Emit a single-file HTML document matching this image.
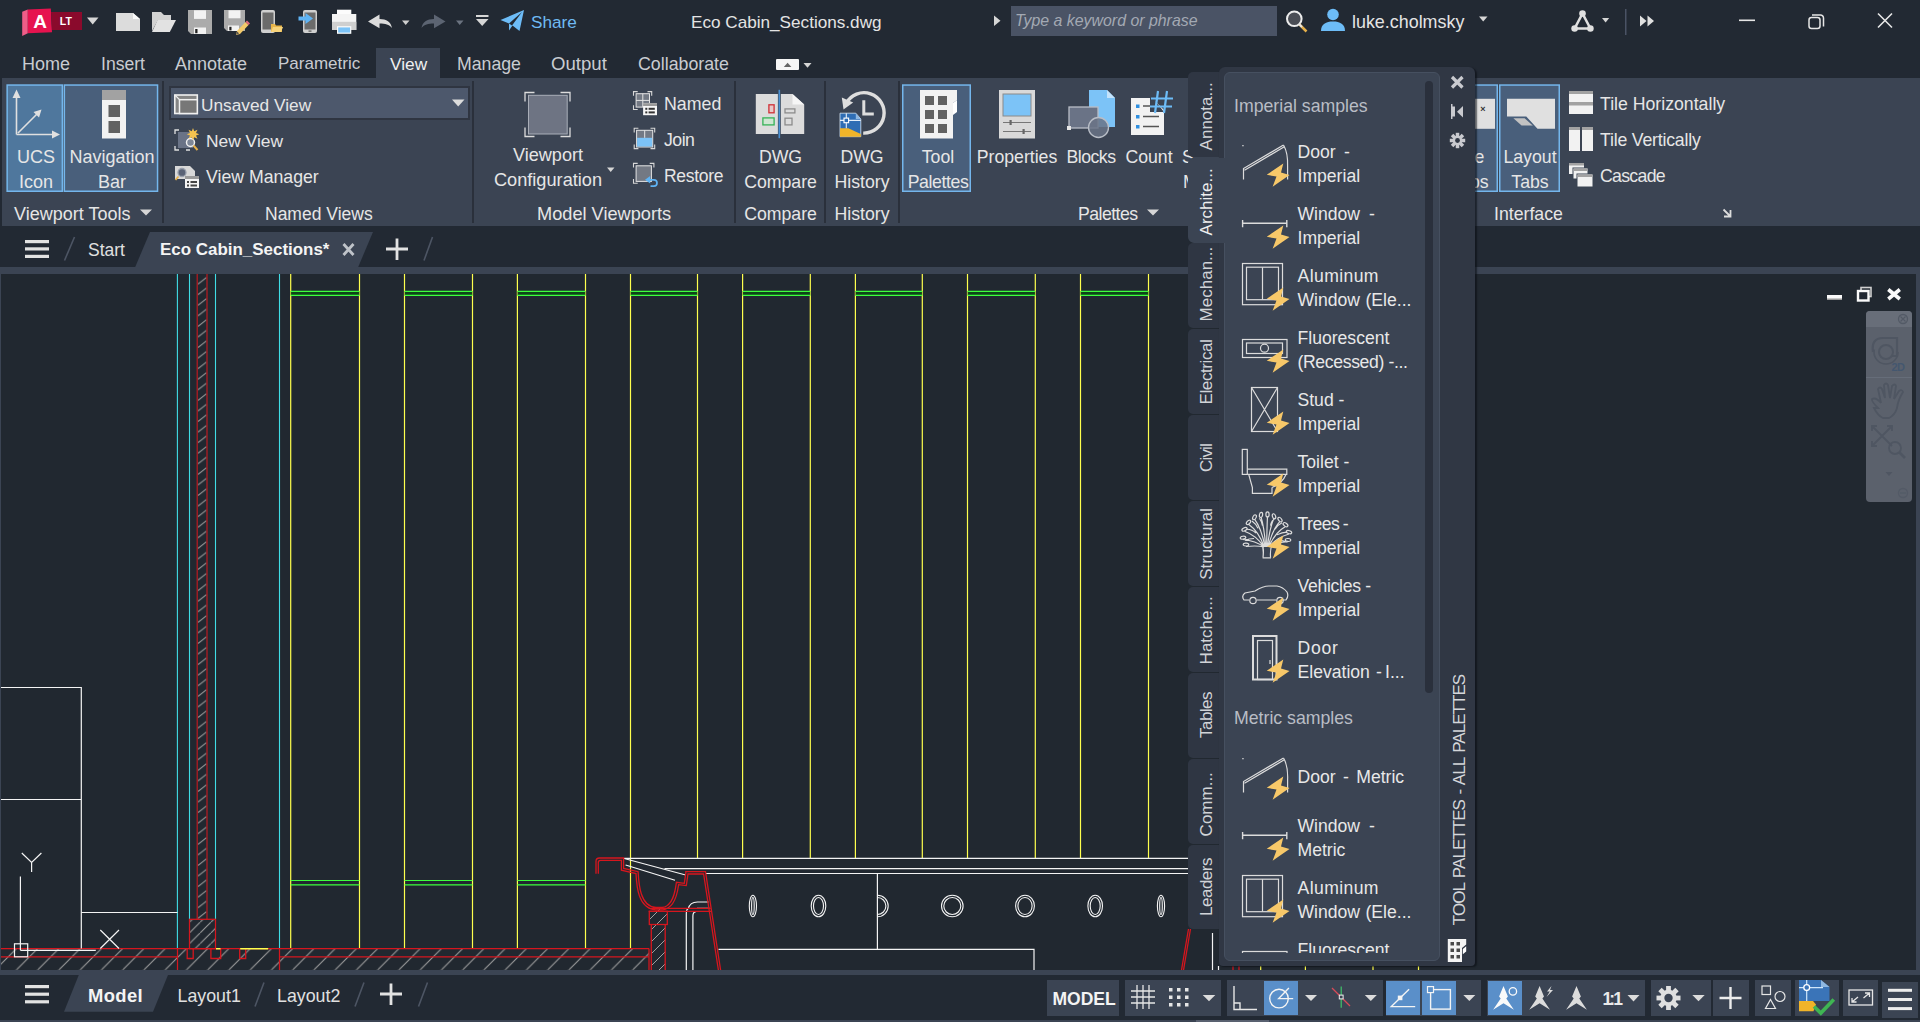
<!DOCTYPE html>
<html lang="en">
<head>
<meta charset="utf-8">
<title>Autodesk AutoCAD LT - Eco Cabin_Sections.dwg</title>
<style>
html,body{margin:0;padding:0;width:1920px;height:1022px;overflow:hidden;background:#222933;font-family:"Liberation Sans",sans-serif;color:#e6e6e6;font-size:17.5px;}
*{box-sizing:border-box}
.a{position:absolute}
.t{position:absolute;white-space:nowrap;line-height:20px;height:20px}
.c{text-align:center}
svg{position:absolute;overflow:visible}
#titlebar{left:0;top:0;width:1920px;height:44px;background:#222933}
#ribtabs{left:0;top:44px;width:1920px;height:34px;background:#222933}
#ribtabs .t{color:#c9ccd1;font-size:18px;margin-top:1px}
#ribbon{left:2px;top:78px;width:1918px;height:148px;background:#3b4453}
.sep{position:absolute;top:81px;height:142px;width:2px;background:#2a303b}
.sel{position:absolute;background:#47617e;border:2px solid #66abe3}
#filetabs{left:0;top:226px;width:1920px;height:41px;background:#222933}
#bar1{left:0;top:267px;width:1920px;height:7px;background:#3b4453}
#draw{left:1px;top:274px;width:1915px;height:696px;background:#212830;overflow:hidden}
#rborder{left:1916px;top:274px;width:4px;height:700px;background:#3b4453}
#lborder{left:0;top:274px;width:1px;height:700px;background:#3b4453}
#bar2{left:0;top:970px;width:1920px;height:5px;background:#3b4453}
#status{left:0;top:975px;width:1920px;height:47px;background:#222933}
#bar3{left:0;top:1020px;width:1920px;height:2px;background:#3b4453}
.sb{position:absolute;top:980px;height:35.500px;background:#3b4453}
.sbon{position:absolute;top:981px;height:34px;background:#5a8fc9}
</style>
</head>
<body>
<!-- TITLE BAR -->
<div id="titlebar" class="a">
<svg style="left:0;top:0" width="620" height="44" viewBox="0 0 620 44">
 <!-- logo -->
 <polygon points="22.200,11.700 27.800,9.400 27.800,33.300 22.200,36.100" fill="#ef5d88"/>
 <polygon points="27.800,9.400 50.800,8.400 52,32.300 27.800,33.300" fill="#e6134f"/>
 <polygon points="51,12 82,12 82,30 52,30" fill="#8a0a2c"/>
 <text x="40" y="27.700" font-family="Liberation Sans, sans-serif" font-weight="700" font-size="19" fill="#fff" text-anchor="middle">A</text>
 <text x="65.800" y="24.800" font-family="Liberation Sans, sans-serif" font-weight="700" font-size="10.500" fill="#fff" text-anchor="middle">LT</text>
 <polygon points="87,17.500 98.500,17.500 92.700,24.500" fill="#d6d6d6"/>
 <!-- new -->
 <path d="M116 13h17l7 6v12h-24z" fill="#dcdcdc"/><path d="M133 13l7 6h-7z" fill="#fafafa"/>
 <!-- open -->
 <path d="M152 31V12h9l3 3h7v5h-13z" fill="#d2d2d2"/><path d="M157.600 20h18.400l-6.200 12h-17.800z" fill="#e2e2e2"/>
 <!-- save -->
 <path d="M188 10h24v24h-21l-3-3z" fill="#ababab"/><rect x="194" y="10.300" width="12" height="8.600" fill="#f2f2f2"/><rect x="194" y="27.500" width="12" height="6.500" fill="#f2f2f2"/><rect x="195.200" y="29" width="2.300" height="4.200" fill="#222"/>
 <!-- save as -->
 <path d="M224 10h21v21h-18l-3-3z" fill="#ababab"/><rect x="228.500" y="10.300" width="12" height="8" fill="#f2f2f2"/><rect x="228" y="25.500" width="11" height="5.500" fill="#f2f2f2"/><rect x="229.300" y="26.800" width="2.200" height="3.600" fill="#222"/>
 <path d="M237 31l8.500-9 3 3-8.500 9-4 1z" fill="#f3c969"/><path d="M245.500 22l1.500-1.500 3 3-1.500 1.500z" fill="#e26a7a"/><path d="M236.200 34.500l1-3 2 2z" fill="#555"/>
 <!-- mobile open -->
 <rect x="261" y="10" width="14" height="23" rx="2" fill="#cfcfcf"/><rect x="262.500" y="12.500" width="11" height="17" fill="#6b6b6b"/>
 <path d="M271 32V24h4l1 1.500h6V32z" fill="#e8b54a"/><path d="M273 27h10l-2 5h-10z" fill="#f7d37a"/>
 <!-- mobile save -->
 <rect x="303" y="10" width="14" height="23" rx="2" fill="#cfcfcf"/><rect x="304.500" y="12.500" width="11" height="17" fill="#6b6b6b"/><rect x="308.500" y="30.500" width="3" height="1.200" fill="#555"/>
 <path d="M298.500 16.500h7v-3.500l7.500 5.500-7.500 5.500v-3.500h-7z" fill="#5fb4f5"/>
 <!-- print -->
 <rect x="337" y="9.700" width="14.300" height="6" fill="#fcfcfc"/><path d="M332 14h24.300v16h-24.300z" fill="#f4f4f4"/><rect x="332" y="21.800" width="24.300" height="8.200" fill="#cfcfcf"/><rect x="337" y="26.200" width="14.300" height="7.600" fill="#fcfcfc"/><rect x="338.200" y="27.400" width="11.900" height="5.200" fill="#7cc3f7"/>
 <!-- undo -->
 <path d="M368 21.500l11.500-7v4.500c7 0 11.500 3 12.500 9-3-3.500-6.500-4.500-12.500-4.500v4.800z" fill="#dcdcdc"/>
 <polygon points="402,20.500 409.500,20.500 405.700,25" fill="#cfcfcf"/>
 <!-- redo -->
 <path d="M445.500 21.500l-11.500-7v4.500c-7 0-11.500 3-12.500 9 3-3.500 6.500-4.500 12.500-4.500v4.800z" fill="#5c6472"/>
 <polygon points="456,20.500 463.500,20.500 459.700,25" fill="#6b7380"/>
 <!-- customize -->
 <rect x="476" y="15" width="12.500" height="2" fill="#d6d6d6"/><polygon points="476,19 488.500,19 482.200,26" fill="#d6d6d6"/>
 <!-- share -->
 <path d="M500.500 20l23.500-10-4.500 21-7-5.500-3.500 5v-7z" fill="#6dbcf7"/><path d="M509 23.500l13-11.500-10 13.500z" fill="#222933"/>
</svg>
<div class="t" style="left:531px;top:12px;font-size:17.200px;color:#6fbaf3">Share</div>
<div class="t" style="left:691px;top:12px;font-size:17.150px;color:#e4e4e4">Eco Cabin_Sections.dwg</div>
<svg style="left:990px;top:0" width="930" height="44" viewBox="990 0 930 44">
 <polygon points="994,15.500 1000.500,20.700 994,26" fill="#d6d6d6"/>
 <rect x="1011" y="6" width="266" height="30" fill="#4a5365"/>
 <!-- search icon -->
 <circle cx="1294.300" cy="18.800" r="7.300" fill="#4a4d55" stroke="#ececec" stroke-width="2"/><path d="M1299.500 24.500l7 7" stroke="#e6b04a" stroke-width="2.500"/><path d="M1299 24l3 3" stroke="#e6e6e6" stroke-width="2"/>
 <!-- user -->
 <circle cx="1333" cy="14.500" r="5.800" fill="#6dbcf7"/><path d="M1321 31c0-7 5-9.500 12-9.500s12 2.500 12 9.500z" fill="#6dbcf7"/>
 <polygon points="1479,16.500 1487.500,16.500 1483.200,21.500" fill="#d6d6d6"/>
 <!-- autodesk app -->
 <path d="M1582.500 13.500L1574.600 28.500H1590.400Z" stroke="#e0e0e0" stroke-width="2.600" fill="none" stroke-linejoin="round"/><circle cx="1582.500" cy="13.500" r="3.300" fill="#e0e0e0"/><circle cx="1574.600" cy="28.500" r="3.300" fill="#e0e0e0"/><circle cx="1590.400" cy="28.500" r="3.300" fill="#e0e0e0"/>
 <polygon points="1602,18 1609.200,18 1605.600,22.500" fill="#d6d6d6"/>
 <rect x="1625" y="9" width="1.500" height="26" fill="#4a5365"/>
 <path d="M1640 15.500l6.500 5.500-6.500 5.500zM1647.500 15.500l6.500 5.500-6.500 5.500z" fill="#e0e0e0"/>
 <!-- window controls -->
 <rect x="1739" y="19.500" width="16" height="1.600" fill="#e6e6e6"/>
 <rect x="1809" y="17.500" width="11" height="11" rx="2.500" fill="none" stroke="#e6e6e6" stroke-width="1.500"/><path d="M1812 15h8.500a3 3 0 0 1 3 3v8.500" fill="none" stroke="#e6e6e6" stroke-width="1.500"/>
 <path d="M1878 13.500l14 14M1892 13.500l-14 14" stroke="#e6e6e6" stroke-width="1.600"/>
</svg>
<div class="t" style="left:1015px;top:11px;font-size:15.900px;font-style:italic;color:#a3a9b3">Type a keyword or phrase</div>
<div class="t" style="left:1352px;top:12px;font-size:17.900px;color:#e4e4e4">luke.cholmsky</div>
</div>
<!-- RIBBON TABS -->
<div id="ribtabs" class="a">
<div class="a" style="left:376px;top:4px;width:64px;height:30px;background:#3b4453"></div>
<div class="t" style="left:22px;top:9px">Home</div>
<div class="t" style="left:101px;top:9px;font-size:17.600px">Insert</div>
<div class="t" style="left:175px;top:9px">Annotate</div>
<div class="t" style="left:278px;top:9px;font-size:17px">Parametric</div>
<div class="t" style="left:390px;top:9px;font-size:17.300px;color:#f0f0f0">View</div>
<div class="t" style="left:457px;top:9px;font-size:17.700px">Manage</div>
<div class="t" style="left:551px;top:9px;font-size:18.600px">Output</div>
<div class="t" style="left:638px;top:9px;font-size:17.800px">Collaborate</div>
<svg style="left:770px;top:8px" width="50" height="24" viewBox="770 52 50 24">
<rect x="776" y="59" width="23" height="11" rx="1" fill="#f6f6f6"/><polygon points="783.800,67 791.400,67 787.600,62.800" fill="#666"/>
<polygon points="803.500,63 811.500,63 807.500,67.800" fill="#d6d6d6"/>
</svg>
</div>
<!-- RIBBON -->
<div id="ribbon" class="a"></div>
<!-- panel separators -->
<div class="sep" style="left:162px"></div>
<div class="sep" style="left:472px"></div>
<div class="sep" style="left:734px"></div>
<div class="sep" style="left:824px"></div>
<div class="sep" style="left:898px"></div>
<!-- P1 viewport tools -->
<svg style="left:0;top:78px" width="1920" height="148" viewBox="0 78 1920 148"><rect x="7.15" y="85.050" width="55.20" height="106.200" fill="#4f779d" stroke="#74b6ec" stroke-width="1.500"/><rect x="64.35" y="85.050" width="93.20" height="106.200" fill="#495f7b" stroke="#74b6ec" stroke-width="1.500"/><rect x="902.75" y="85.050" width="67.50" height="106.200" fill="#495f7b" stroke="#74b6ec" stroke-width="1.500"/><rect x="1440.75" y="85.050" width="56.50" height="106.200" fill="#495f7b" stroke="#74b6ec" stroke-width="1.500"/><rect x="1499.75" y="85.050" width="59.50" height="106.200" fill="#495f7b" stroke="#74b6ec" stroke-width="1.500"/></svg>
<svg style="left:0;top:78px" width="170" height="148" viewBox="0 78 170 148">
 <path d="M16.500 134.500V96M16.500 134.500H54M18 133l21-21" stroke="#e0e0e0" stroke-width="1.600" fill="none"/>
 <polygon points="12.500,98 20.500,98 16.500,89.500" fill="#e0e0e0"/><polygon points="52,130.500 52,138.500 60,134.500" fill="#e0e0e0"/><polygon points="41.500,109.500 33.500,112 39,117.500" fill="#e0e0e0"/>
 <rect x="102" y="90" width="24" height="11" fill="#a2a2a2"/><rect x="102" y="100" width="24" height="38.500" fill="#f2f2f2"/><rect x="108.500" y="105" width="11.500" height="12" fill="#626262"/><rect x="108.500" y="121" width="11.500" height="12" fill="#626262"/>
 <polygon points="140,209.500 152,209.500 146,215.500" fill="#d6d6d6"/>
</svg>
<div class="t c" style="left:7px;width:58px;top:147px;font-size:18px">UCS</div>
<div class="t c" style="left:7px;width:58px;top:172px;font-size:18px">Icon</div>
<div class="t c" style="left:62px;width:100px;top:147px;font-size:18px">Navigation</div>
<div class="t c" style="left:62px;width:100px;top:172px;font-size:18px">Bar</div>
<div class="t" style="left:14px;top:204px;font-size:18px">Viewport Tools</div>
<!-- P2 named views -->
<div class="a" style="left:169px;top:86px;width:301px;height:34px;background:#4d586c;border:2px solid #2f3541"></div>
<svg style="left:165px;top:78px" width="310" height="148" viewBox="165 78 310 148">
 <rect x="174.800" y="95" width="22.500" height="18.500" fill="#858585" stroke="#f0f0f0" stroke-width="1.600"/><rect x="179.500" y="99.700" width="17.800" height="13.800" fill="#777" stroke="#f0f0f0" stroke-width="1.500"/><path d="M174.800 95l4.700 4.700" stroke="#f0f0f0" stroke-width="1.200"/>
 <polygon points="452,99.500 464.500,99.500 458.200,106.500" fill="#dcdcdc"/>
 <!-- new view -->
 <rect x="178" y="132" width="15" height="16" fill="#6a7386"/><path d="M175 134v-4h4M175 146v4h4M190 150h-4" fill="none" stroke="#e0e0e0" stroke-width="1.300"/>
 <circle cx="190.500" cy="142.500" r="4" fill="#7e8797" stroke="#f0f0f0" stroke-width="1.500"/><path d="M193.500 145.500l4 4.500" stroke="#e6b04a" stroke-width="2"/>
 <path d="M193 128l1.200 3.300 3.300-1.500-1.500 3.300 3.300 1.200-3.300 1.200 1.500 3.300-3.300-1.500-1.200 3.300-1.200-3.300-3.300 1.500 1.500-3.300-3.300-1.200 3.300-1.200-1.500-3.300 3.300 1.500z" fill="#f5c34f"/>
 <!-- view manager -->
 <rect x="175" y="166" width="15" height="13" fill="#d8d8d8"/><path d="M190 166l5 5v8h-5z" fill="#d8d8d8"/><circle cx="182" cy="172.500" r="4" fill="#5a6376" stroke="#9aa1ad" stroke-width="1.300"/><path d="M178.500 176.500l-3 3.500" stroke="#e6b04a" stroke-width="1.800"/>
 <rect x="185" y="176" width="14" height="12" fill="#f4f4f4"/><rect x="185" y="176" width="14" height="3" fill="#9a9a9a"/><rect x="187" y="181" width="2" height="2" fill="#444"/><rect x="190.500" y="181" width="6.500" height="2" fill="#444"/><rect x="187" y="184.500" width="2" height="2" fill="#444"/><rect x="190.500" y="184.500" width="6.500" height="2" fill="#444"/>
</svg>
<div class="t" style="left:201px;top:95px;font-size:17.300px">Unsaved View</div>
<div class="t" style="left:206px;top:131px;font-size:17.400px">New View</div>
<div class="t" style="left:206px;top:167px;font-size:17.700px">View Manager</div>
<div class="t" style="left:265px;top:204px;font-size:17.500px">Named Views</div>
<!-- P3 model viewports -->
<svg style="left:474px;top:78px" width="262" height="148" viewBox="474 78 262 148">
 <rect x="528.500" y="95.300" width="38.700" height="38.700" fill="#6e7483" stroke="#a9aeb8" stroke-width="1"/>
 <path d="M525 101.500v-9h9.500M560.500 92.500h9.500v9M570 127.500v9h-9.500M534.500 136.500h-9.500v-9" fill="none" stroke="#dcdcdc" stroke-width="1.300"/>
 <polygon points="607,167.500 614.500,167.500 610.700,172" fill="#d6d6d6"/>
 <!-- named -->
 <rect x="636.100" y="93.700" width="13.400" height="13.400" fill="#737984" stroke="#e4e4e4" stroke-width="1"/><path d="M642.800 93.700v13.400M636.100 100.400h13.400" stroke="#e4e4e4" stroke-width="1"/>
 <path d="M633.500 95.800v-4.200h4.200M647.500 91.600h4.200v4.200M633.500 105.300v4.200h4.200" fill="none" stroke="#d8d8d8" stroke-width="1.100"/>
 <rect x="643.100" y="103.200" width="13.900" height="12" fill="#f6f6f6"/><rect x="643.100" y="103.200" width="13.900" height="2.800" fill="#9a9a9a"/><rect x="645.300" y="107.800" width="2" height="2" fill="#333"/><rect x="648.600" y="107.800" width="6.200" height="2" fill="#333"/><rect x="645.300" y="111.400" width="2" height="2" fill="#333"/><rect x="648.600" y="111.400" width="6.200" height="2" fill="#333"/>
 <!-- join -->
 <rect x="636.600" y="130.300" width="16.100" height="16.700" fill="#737984" stroke="#e4e4e4" stroke-width="1"/><rect x="637.100" y="137.800" width="15.100" height="8.700" fill="#7cc3f7"/><path d="M644.700 130.300v7.500" stroke="#e4e4e4" stroke-width="1"/>
 <path d="M634.200 132.400v-4.200h4.200M650.500 128.200h4.200v4.200M654.700 144.400v4.200h-4.200M638.400 148.600h-4.200v-4.200" fill="none" stroke="#d8d8d8" stroke-width="1.100"/>
 <!-- restore -->
 <rect x="636.100" y="165.800" width="15.300" height="15.600" fill="#737984" stroke="#e4e4e4" stroke-width="1"/>
 <path d="M633.500 167.600v-4.200h4.200M649.700 163.400h4.200v4.200M637.700 183.300h-4.200v-4.200" fill="none" stroke="#d8d8d8" stroke-width="1.100"/>
 <path d="M649 179.800h4.800a3.200 3.200 0 0 1 0 6.400h-3.300" fill="none" stroke="#5fb4f5" stroke-width="1.700"/><polygon points="645,179.800 650.200,176 650.200,183.600" fill="#5fb4f5"/>
</svg>
<div class="t c" style="left:488px;width:120px;top:145px;font-size:18.100px">Viewport</div>
<div class="t c" style="left:488px;width:120px;top:170px;font-size:18.200px">Configuration</div>
<div class="t" style="left:664px;top:94px;font-size:17.800px">Named</div>
<div class="t" style="left:664px;top:130px;font-size:17.700px;letter-spacing:-0.500px">Join</div>
<div class="t" style="left:664px;top:166px;font-size:17.500px;letter-spacing:-0.300px">Restore</div>
<div class="t" style="left:537px;top:204px;font-size:18.200px">Model Viewports</div>
<!-- P4 compare / P5 history -->
<svg style="left:737px;top:78px" width="165" height="148" viewBox="737 78 165 148">
 <path d="M755.800 94h22.100v40h-22.100z" fill="#dcdcdc"/><path d="M780.800 94h11.700l11.700 10.400v29.600h-23.400z" fill="#dcdcdc"/><path d="M792.500 94l11.700 10.400h-11.700z" fill="#f6f6f6"/>
 <rect x="778.500" y="89.800" width="1.600" height="48.400" fill="#4a90d2"/>
 <rect x="768.900" y="104.800" width="5.200" height="8" fill="#e8c8c8" stroke="#cf2f36" stroke-width="1.300"/><rect x="762.900" y="117.900" width="11.200" height="7" fill="#cfe6d2" stroke="#35b257" stroke-width="1.300"/>
 <rect x="785" y="108.900" width="9.900" height="4" fill="none" stroke="#8c8c8c" stroke-width="1.300"/><rect x="785" y="118.200" width="7" height="6.700" fill="none" stroke="#8c8c8c" stroke-width="1.300"/>
 <!-- history -->
 <path d="M846.1 103.4A20.2 20.2 0 1 1 863.2 133.1" fill="none" stroke="#dedede" stroke-width="3.400"/><polygon points="841.800,97.600 853.200,102.600 843.500,109.600" fill="#dedede"/>
 <path d="M863.800 100.200v13.800h10" fill="none" stroke="#dedede" stroke-width="3"/>
 <path d="M840 113.200h15.800l5 5.800v17.700h-20.800z" fill="#2e6db4" stroke="#d6e6f5" stroke-width="0.800"/><path d="M855.800 113.200l5 5.800h-5z" fill="#8fb8e2"/><path d="M840 128.200h8.300l12.500 5.800v2.700h-20.800z" fill="#f0b429"/>
 <path d="M846.300 113.200v15M840 120.400h20.800" stroke="#e4effa" stroke-width="1.100"/><rect x="844" y="118.100" width="4.600" height="4.600" fill="#2e6db4" stroke="#ffffff" stroke-width="1.100"/>
</svg>
<div class="t c" style="left:737px;width:87px;top:147px;font-size:17.700px">DWG</div>
<div class="t c" style="left:737px;width:87px;top:172px;font-size:17.700px">Compare</div>
<div class="t c" style="left:737px;width:87px;top:204px;font-size:17.700px">Compare</div>
<div class="t c" style="left:826px;width:72px;top:147px;font-size:17.700px">DWG</div>
<div class="t c" style="left:826px;width:72px;top:172px;font-size:17.700px">History</div>
<div class="t c" style="left:826px;width:72px;top:204px;font-size:17.700px">History</div>
<!-- P6 palettes -->
<svg style="left:900px;top:78px" width="300" height="148" viewBox="900 78 300 148">
 <path d="M920 90h37v10l-4 3v35.500h-33z" fill="#f2f2f2"/><path d="M953 103l4-3v12l-4 3z" fill="#ffffff"/>
 <rect x="925" y="96" width="9" height="9" fill="#626262"/><rect x="938" y="96" width="9" height="9" fill="#626262"/><rect x="925" y="110" width="9" height="9" fill="#626262"/><rect x="938" y="110" width="9" height="9" fill="#626262"/><rect x="925" y="124" width="9" height="9" fill="#626262"/><rect x="938" y="124" width="9" height="9" fill="#626262"/>
 <!-- properties -->
 <rect x="999" y="90" width="36" height="48.500" fill="#d9d9d9"/><rect x="1003" y="94" width="28" height="22" fill="#7cc3f7" stroke="#8a8a8a" stroke-width="1"/>
 <path d="M1003 122.500h28M1003 131.500h28" stroke="#777" stroke-width="1.200"/><rect x="1009.500" y="120" width="2.200" height="5" fill="#666"/><rect x="1022.500" y="129" width="2.200" height="5" fill="#666"/>
 <!-- blocks -->
 <path d="M1089 90h18l8 8v29h-26z" fill="#7cc3f7"/><path d="M1107 90l8 8h-8z" fill="#c4e3fb"/>
 <rect x="1069" y="107" width="29" height="21" fill="#6a7386" stroke="#b9bec7" stroke-width="1.300"/><rect x="1067" y="126" width="4" height="4" fill="#e6e6e6"/>
 <circle cx="1098.500" cy="127.500" r="10" fill="#6a7386" fill-opacity="0.850" stroke="#b9bec7" stroke-width="1.300"/>
 <!-- count -->
 <path d="M1131 98h21l12 12v25h-33z" fill="#f2f2f2"/><path d="M1150 98v11h12" fill="#222933" fill-opacity="0"/>
 <rect x="1136" y="104.500" width="3.500" height="3.500" fill="#2e8fe0"/><rect x="1136" y="115" width="3.500" height="3.500" fill="#2e8fe0"/><rect x="1136" y="125" width="3.500" height="3.500" fill="#2e8fe0"/>
 <path d="M1143 106h9M1143 116.500h16M1143 126.500h16" stroke="#555" stroke-width="1.600"/>
 <path d="M1150 94v18h14" fill="#3b4453" stroke="none"/>
 <path d="M1158 91l-3 22M1167 91l-3 22M1151 98.500h22M1150 106.500h22" stroke="#6dbcf7" stroke-width="2.200" fill="none"/>
 <polygon points="1147,209.500 1159,209.500 1153,215.500" fill="#d6d6d6"/>
</svg>
<div class="t c" style="left:902px;width:72px;top:147px;font-size:17.700px">Tool</div>
<div class="t c" style="left:902px;width:72px;top:172px;font-size:17.700px;letter-spacing:-0.400px">Palettes</div>
<div class="t c" style="left:972px;width:90px;top:147px;font-size:17.700px">Properties</div>
<div class="t c" style="left:1061px;width:60px;top:147px;font-size:17.700px;letter-spacing:-0.500px">Blocks</div>
<div class="t c" style="left:1119px;width:60px;top:147px;font-size:17.700px">Count</div>
<div class="t" style="left:1182px;top:147px;font-size:17.700px">S</div>
<div class="t" style="left:1183px;top:172px;font-size:17.700px">M</div>
<div class="t" style="left:1078px;top:204px;font-size:17.700px;letter-spacing:-0.550px">Palettes</div>
<!-- P7 interface -->
<svg style="left:1440px;top:78px" width="300" height="148" viewBox="1440 78 300 148">
 <rect x="1460" y="98.800" width="35" height="30" fill="#e0e0e0"/><text x="1483" y="111.500" font-family="Liberation Sans, sans-serif" font-size="9" font-weight="700" fill="#333" text-anchor="middle">×</text>
 <path d="M1507 98.800h48v30h-17.500l-11.200-12.200h-19.300z" fill="#e0e0e0"/><path d="M1513.400 118.200h11.200l8.200 7.400h-11.200z" fill="#c2c2c2"/>
 <rect x="1569" y="91" width="24" height="23" fill="#f2f2f2"/><rect x="1569" y="91" width="24" height="3" fill="#a2a2a2"/><rect x="1569" y="102" width="24" height="3.500" fill="#a2a2a2"/>
 <rect x="1569" y="127" width="24" height="24" fill="#f2f2f2"/><rect x="1569" y="127" width="24" height="3" fill="#a2a2a2"/><rect x="1580" y="127" width="2" height="24" fill="#3b4453"/>
 <rect x="1569" y="163" width="15" height="11" fill="#f2f2f2"/><rect x="1569" y="163" width="15" height="2.500" fill="#a2a2a2"/>
 <rect x="1573" y="168" width="15" height="11" fill="#f2f2f2" stroke="#3b4453" stroke-width="1"/><rect x="1573.500" y="168.500" width="14" height="2.500" fill="#a2a2a2"/>
 <rect x="1577" y="174" width="16" height="13" fill="#f2f2f2" stroke="#3b4453" stroke-width="1"/><rect x="1577.500" y="174.500" width="15" height="2.500" fill="#a2a2a2"/>
 <path d="M1723.500 209.500l6.500 6.500M1730.500 210v6.500h-6.500" stroke="#dcdcdc" stroke-width="1.800" fill="none"/>
</svg>
<div class="t c" style="left:1440px;width:60px;top:147px;font-size:17.700px">File</div>
<div class="t c" style="left:1440px;width:60px;top:172px;font-size:17.700px">Tabs</div>
<div class="t c" style="left:1499px;width:62px;top:147px;font-size:17.700px">Layout</div>
<div class="t c" style="left:1499px;width:62px;top:172px;font-size:17.700px">Tabs</div>
<div class="t" style="left:1600px;top:94px;font-size:17.700px">Tile Horizontally</div>
<div class="t" style="left:1600px;top:130px;font-size:17.700px;letter-spacing:-0.200px">Tile Vertically</div>
<div class="t" style="left:1600px;top:166px;font-size:17.700px;letter-spacing:-0.700px">Cascade</div>
<div class="t" style="left:1494px;top:204px;font-size:17.700px">Interface</div>

<!-- FILE TABS -->
<div id="filetabs" class="a"></div>
<svg style="left:0;top:226px" width="460" height="48" viewBox="0 226 460 48">
 <polygon points="135,267.500 150,232 373,232 358,267.500" fill="#3b4453"/>
 <rect x="25" y="240" width="24" height="3.200" fill="#e2e2e2"/><rect x="25" y="247.300" width="24" height="3.200" fill="#e2e2e2"/><rect x="25" y="254.800" width="24" height="3.200" fill="#e2e2e2"/>
 <path d="M64.500 260.500l10-23.500" stroke="#4d5564" stroke-width="1.600"/>
 <path d="M424 260.500l8.500-23.500" stroke="#4d5564" stroke-width="1.600"/>
 <path d="M343.500 244l10 11M353.500 244l-10 11" stroke="#bfc3c9" stroke-width="2.800"/>
 <path d="M386 249h22M397 238.500v21.500" stroke="#e2e2e2" stroke-width="2.800"/>
</svg>
<div class="t" style="left:88px;top:240px;font-size:17.500px;color:#e0e0e0">Start</div>
<div class="t" style="left:160px;top:240px;font-size:16.950px;font-weight:700;color:#f4f4f4">Eco Cabin_Sections*</div>
<div id="bar1" class="a"></div>
<!-- DRAWING -->
<div id="draw" class="a"><svg style="left:-1px;top:-274px" width="1920" height="1022" viewBox="0 0 1920 1022" shape-rendering="auto"><defs>
<pattern id="hf" width="21.250" height="21.250" patternUnits="userSpaceOnUse" patternTransform="translate(16.650 948.400)"><path d="M-1 22.250L22.250 -1" stroke="#a0a0a0" stroke-width="1.050"/></pattern>
<pattern id="hb" width="10.700" height="10.700" patternUnits="userSpaceOnUse" patternTransform="translate(189.500 922.200)"><path d="M-1 11.700L11.700 -1" stroke="#a0a0a0" stroke-width="1"/></pattern>
<pattern id="hw" width="20" height="10.570" patternUnits="userSpaceOnUse" patternTransform="translate(197.200 274)"><path d="M0.600 10.300L9.300 3.400M0.600 -0.270L9.300 -7.170M0.600 20.870L9.300 13.970" stroke="#a0a0a0" stroke-width="1"/></pattern>
<pattern id="hc" width="12" height="12" patternUnits="userSpaceOnUse" patternTransform="translate(649 908)"><path d="M-1 13L13 -1" stroke="#a0a0a0" stroke-width="1"/></pattern>
</defs>
<path d="M290.7 274V948.5" stroke="#ffff4d" stroke-width="1.200"/>
<path d="M359.5 274V948.5" stroke="#ffff4d" stroke-width="1.200"/>
<rect x="290.7" y="291.300" width="68.8" height="4" fill="#0a4a14" fill-opacity="0.800"/>
<path d="M290.7 291.300H359.5M290.7 295.400H359.5" stroke="#3dff3d" stroke-width="1.200"/>
<path d="M290.7 880.500H359.5M290.7 884.800H359.5" stroke="#3dff3d" stroke-width="1.200"/>
<path d="M404.5 274V948.5" stroke="#ffff4d" stroke-width="1.200"/>
<path d="M472.5 274V948.5" stroke="#ffff4d" stroke-width="1.200"/>
<rect x="404.5" y="291.300" width="68.0" height="4" fill="#0a4a14" fill-opacity="0.800"/>
<path d="M404.5 291.300H472.5M404.5 295.400H472.5" stroke="#3dff3d" stroke-width="1.200"/>
<path d="M404.5 880.500H472.5M404.5 884.800H472.5" stroke="#3dff3d" stroke-width="1.200"/>
<path d="M517.4 274V948.5" stroke="#ffff4d" stroke-width="1.200"/>
<path d="M585.5 274V948.5" stroke="#ffff4d" stroke-width="1.200"/>
<rect x="517.4" y="291.300" width="68.1" height="4" fill="#0a4a14" fill-opacity="0.800"/>
<path d="M517.4 291.300H585.5M517.4 295.400H585.5" stroke="#3dff3d" stroke-width="1.200"/>
<path d="M517.4 880.500H585.5M517.4 884.800H585.5" stroke="#3dff3d" stroke-width="1.200"/>
<path d="M630.5 274V948.5" stroke="#ffff4d" stroke-width="1.200"/>
<path d="M697.5 274V858" stroke="#ffff4d" stroke-width="1.200"/>
<rect x="630.5" y="291.300" width="67.0" height="4" fill="#0a4a14" fill-opacity="0.800"/>
<path d="M630.5 291.300H697.5M630.5 295.400H697.5" stroke="#3dff3d" stroke-width="1.200"/>
<path d="M742.6 274V858" stroke="#ffff4d" stroke-width="1.200"/>
<path d="M810.3 274V858" stroke="#ffff4d" stroke-width="1.200"/>
<rect x="742.6" y="291.300" width="67.7" height="4" fill="#0a4a14" fill-opacity="0.800"/>
<path d="M742.6 291.300H810.3M742.6 295.400H810.3" stroke="#3dff3d" stroke-width="1.200"/>
<path d="M855.4 274V858" stroke="#ffff4d" stroke-width="1.200"/>
<path d="M922.3 274V858" stroke="#ffff4d" stroke-width="1.200"/>
<rect x="855.4" y="291.300" width="66.9" height="4" fill="#0a4a14" fill-opacity="0.800"/>
<path d="M855.4 291.300H922.3M855.4 295.400H922.3" stroke="#3dff3d" stroke-width="1.200"/>
<path d="M967.5 274V858" stroke="#ffff4d" stroke-width="1.200"/>
<path d="M1035.3 274V858" stroke="#ffff4d" stroke-width="1.200"/>
<rect x="967.5" y="291.300" width="67.8" height="4" fill="#0a4a14" fill-opacity="0.800"/>
<path d="M967.5 291.300H1035.3M967.5 295.400H1035.3" stroke="#3dff3d" stroke-width="1.200"/>
<path d="M1080.5 274V858" stroke="#ffff4d" stroke-width="1.200"/>
<path d="M1148.5 274V858" stroke="#ffff4d" stroke-width="1.200"/>
<rect x="1080.5" y="291.300" width="68.0" height="4" fill="#0a4a14" fill-opacity="0.800"/>
<path d="M1080.5 291.300H1148.5M1080.5 295.400H1148.5" stroke="#3dff3d" stroke-width="1.200"/>
<path d="M177.400 274V948.500M189.500 274V919M215.500 274V919M279.500 274V948.500" stroke="#40dde6" stroke-width="1.100"/>
<rect x="197.500" y="274" width="9.500" height="645.500" fill="url(#hw)"/>
<path d="M197.200 274V919.500M207 274V919.500" stroke="#b61a21" stroke-width="1.250"/>
<rect x="189.500" y="919.500" width="26" height="29" fill="url(#hb)"/>
<rect x="189.500" y="919.300" width="26" height="29.400" fill="none" stroke="#d6161e" stroke-width="1.250"/>
<rect x="1" y="948.500" width="648" height="22" fill="url(#hf)"/>
<path d="M1 948.700H649M1 956.800H177.500M279.500 956.800H649M177.500 948.500V970M279.500 948.500V970M649 948.500V970" stroke="#d6161e" stroke-width="1.250" fill="none"/>
<path d="M187.200 948.500v10h6v-10M210.900 948.500v10h9.800v-10M239.700 948.500v10h6v-10" stroke="#d6161e" stroke-width="1.300" fill="none"/>
<path d="M216 948.700h4.500M240.200 948.700h28" stroke="#ffff4d" stroke-width="1.600"/>
<path d="M1 687.500H81.300V948.500M1 799.500H81.300M81.300 912.500H177.500" stroke="#f4f4f4" stroke-width="1.200" fill="none"/>
<rect x="14.500" y="943.800" width="13.200" height="13" fill="none" stroke="#f4f4f4" stroke-width="1.200"/><path d="M20.400 950.300V876.500M20.400 950.300H95.800" stroke="#f4f4f4" stroke-width="1.200" fill="none"/>
<path d="M21.800 853l9.800 9.500 9.800-9.500M31.600 862.500v9.500" stroke="#f4f4f4" stroke-width="1.200" fill="none"/><path d="M100.300 930l18.700 18.500M119 930l-18.700 18.500" stroke="#f4f4f4" stroke-width="1.200"/>
<path d="M624.200 858.400H1190M664.500 868.600H1190M706 873.500H1190M718.500 949.300H1034V970M877.400 873.500V949.300" stroke="#f4f4f4" stroke-width="1.200" fill="none"/>
<path d="M624.200 858.500L685.600 875M625.600 865L675 880.300" stroke="#f4f4f4" stroke-width="1.200"/>
<path d="M688.300 908.700Q690 902 697.500 902H708.500M697 908.400H709.500M686.300 970V914Q686.300 909 688.300 908.700M692.900 970V916Q692.900 912 696 911.600" stroke="#f4f4f4" stroke-width="1.200" fill="none"/>
<ellipse cx="752.9" cy="906" rx="3.6" ry="10.800" fill="none" stroke="#f4f4f4" stroke-width="1.100"/><ellipse cx="752.9" cy="906" rx="1.3" ry="8.500" fill="none" stroke="#f4f4f4" stroke-width="1.100"/>
<ellipse cx="818.5" cy="906" rx="7.3" ry="10.800" fill="none" stroke="#f4f4f4" stroke-width="1.100"/><ellipse cx="818.5" cy="906" rx="5.0" ry="8.500" fill="none" stroke="#f4f4f4" stroke-width="1.100"/>
<ellipse cx="952.3" cy="906" rx="10.8" ry="10.800" fill="none" stroke="#f4f4f4" stroke-width="1.100"/><ellipse cx="952.3" cy="906" rx="8.5" ry="8.500" fill="none" stroke="#f4f4f4" stroke-width="1.100"/>
<ellipse cx="1025" cy="906" rx="9.4" ry="10.800" fill="none" stroke="#f4f4f4" stroke-width="1.100"/><ellipse cx="1025" cy="906" rx="7.1" ry="8.500" fill="none" stroke="#f4f4f4" stroke-width="1.100"/>
<ellipse cx="1095.2" cy="906" rx="7.3" ry="10.800" fill="none" stroke="#f4f4f4" stroke-width="1.100"/><ellipse cx="1095.2" cy="906" rx="5.0" ry="8.500" fill="none" stroke="#f4f4f4" stroke-width="1.100"/>
<ellipse cx="1161" cy="906" rx="3.6" ry="10.800" fill="none" stroke="#f4f4f4" stroke-width="1.100"/><ellipse cx="1161" cy="906" rx="1.3" ry="8.500" fill="none" stroke="#f4f4f4" stroke-width="1.100"/>
<path d="M877.400 895.200A10.800 10.800 0 0 1 877.400 916.800M877.400 897.500A8.500 8.500 0 0 1 877.400 914.500" fill="none" stroke="#f4f4f4" stroke-width="1.100"/>
<rect x="649.300" y="909" width="18" height="15.500" fill="url(#hc)"/><rect x="651.300" y="924.500" width="14" height="45.500" fill="url(#hc)"/>
<path d="M596 873.700V861.500Q596 858 599.500 858H623.600V868.400L638.100 871.700C638.800 884 640 906.500 656 907.500H662C674 906.500 675.500 888 676.400 882.300L684.300 883.300L685.800 873.200V871.700H705.500L720.600 970" stroke="#d6161e" stroke-width="1.300" fill="none"/><path d="M598.300 873.700V862.500Q598.300 860.300 600.500 860.300H621.400V870.200L636 873.500C636.600 886 638 908.500 655.500 909.800H662.500C676 908.500 677.800 890 678.600 884.700L686.300 885.600L688 874H703.600L718.400 970" stroke="#d6161e" stroke-width="1.300" fill="none"/>
<path d="M648.700 908.300H710.700M648.700 911.300H711.200" stroke="#d6161e" stroke-width="1.300"/>
<rect x="649.300" y="911.300" width="18" height="13.200" fill="none" stroke="#d6161e" stroke-width="1.300"/><path d="M651.300 924.500V970M665.200 924.500V970" stroke="#d6161e" stroke-width="1.300"/>
<path d="M1188.500 929L1181.500 970M1190.500 929L1183.500 970" stroke="#d6161e" stroke-width="1.300"/>
<path d="M1212.500 933V970M1218.500 966V970" stroke="#f4f4f4" stroke-width="1.200"/>
<path d="M1233 966v4M1239 966v4" stroke="#d6161e" stroke-width="1.200"/><path d="M1260.700 966v4M1305.400 966v4M1373 966v4M1418.500 966v4" stroke="#ffff4d" stroke-width="1.200"/></svg>
<!-- viewport controls -->
<svg style="left:1819px;top:10px" width="100" height="230" viewBox="1820 284 100 230">
 <rect x="1827" y="295" width="15" height="4.500" fill="#fafafa"/><rect x="1827" y="298.500" width="15" height="1.500" fill="#9a9a9a"/>
 <rect x="1861" y="287.500" width="10" height="9" fill="none" stroke="#d0d0d0" stroke-width="1.600"/><rect x="1858" y="291" width="10.500" height="9.500" fill="#222933" stroke="#fafafa" stroke-width="2.400"/>
 <path d="M1888.300 289.500l11.500 9.500M1899.800 289.500l-11.500 9.500" stroke="#fafafa" stroke-width="3.600"/>
 <!-- nav bar -->
 <rect x="1866" y="311" width="46" height="191" rx="4" fill="#5b616c"/><path d="M1866 327V315a4 4 0 0 1 4-4h38a4 4 0 0 1 4 4v12z" fill="#686e79"/>
 <circle cx="1903" cy="319" r="4.500" fill="none" stroke="#535a66" stroke-width="1.300"/><path d="M1900.500 316.500l5 5M1905.500 316.500l-5 5" stroke="#535a66" stroke-width="1.200"/>
 <path d="M1866 377.500h46" stroke="#666d79" stroke-width="1"/>
 <path d="M1873 352q-2-14 10-14h14v18h-6" fill="none" stroke="#4f5662" stroke-width="2.200"/><circle cx="1886" cy="352" r="7" fill="none" stroke="#4f5662" stroke-width="2"/><circle cx="1886" cy="352" r="12" fill="none" stroke="#4f5662" stroke-width="1.600" stroke-dasharray="40 36"/>
 <text x="1898" y="371" font-family="Liberation Sans, sans-serif" font-size="11" font-weight="700" fill="#44576f" text-anchor="middle" letter-spacing="-0.500">2D</text>
 <path d="M1878 408q-7-7-6-9q4-2 9 4l-3-14q2-3 4 0l3 9l-1-13q2-3 4 0l2 13l2-12q3-3 4 0l-2 13l5-8q3-2 4 1q-5 8-6 16q-2 7-8 10h-6q-5-2-9-10z" fill="none" stroke="#4f5662" stroke-width="1.800"/>
 <path d="M1872 426l20 20M1892 426l-20 20M1872 431v-5h5M1887 426h5v5M1872 441v5h5" fill="none" stroke="#4f5662" stroke-width="1.800"/><circle cx="1895" cy="448" r="6" fill="none" stroke="#4f5662" stroke-width="1.800"/><path d="M1899.500 452.500l5.500 5.500" stroke="#4f5662" stroke-width="2.600"/>
 <polygon points="1885.500,472 1892.500,472 1889,476" fill="#4f5662"/>
 <circle cx="1903" cy="493" r="4.500" fill="none" stroke="#535a66" stroke-width="1.300"/><path d="M1900 493h6" stroke="#535a66" stroke-width="1.200"/>
</svg></div>
<div id="lborder" class="a"></div>
<div id="rborder" class="a"></div>
<!-- STATUS -->
<div id="bar2" class="a"></div>
<div id="status" class="a"></div>
<div id="bar3" class="a"></div><div class="a" style="left:1196px;top:1020px;width:73px;height:2px;background:#596170"></div>
<svg style="left:0;top:975px" width="460" height="44" viewBox="0 975 460 44">
 <polygon points="64,1011.700 78.800,975 168,975 153,1011.700" fill="#3b4453"/>
 <rect x="25" y="985" width="24" height="3.200" fill="#e2e2e2"/><rect x="25" y="992.600" width="24" height="3.200" fill="#e2e2e2"/><rect x="25" y="1000.200" width="24" height="3.200" fill="#e2e2e2"/>
 <path d="M255 1006.500l9-24M355 1006.500l9-24M418.500 1006.500l9-24" stroke="#4d5564" stroke-width="1.600"/>
 <path d="M380 994h22M391 983.500v21.500" stroke="#e2e2e2" stroke-width="2.800"/>
</svg>
<div class="t" style="left:88px;top:986px;font-size:18.400px;font-weight:700;letter-spacing:0.400px;color:#f4f4f4">Model</div>
<div class="t" style="left:177.500px;top:986px;font-size:17.800px;color:#e0e0e0">Layout1</div>
<div class="t" style="left:277px;top:986px;font-size:17.800px;color:#e0e0e0">Layout2</div>
<!-- status buttons -->
<div class="sb" style="left:1047px;width:72px"></div>
<div class="sb" style="left:1125px;width:96px"></div>
<div class="sb" style="left:1227px;width:156px"></div>
<div class="sb" style="left:1386px;width:95px"></div>
<div class="sb" style="left:1487px;width:158px"></div>
<div class="sb" style="left:1651px;width:60px"></div>
<div class="sb" style="left:1713px;width:36px"></div>
<div class="sb" style="left:1755px;width:36px"></div>
<div class="sb" style="left:1795px;width:44px"></div>
<div class="sb" style="left:1843px;width:35px"></div>
<div class="sb" style="left:1882px;width:35.500px;top:982px;height:36px"></div>
<div class="sbon" style="left:1264px;width:34px"></div>
<div class="sbon" style="left:1386px;width:34px"></div>
<div class="sbon" style="left:1422px;width:34px"></div>
<div class="sbon" style="left:1488px;width:34px"></div>
<div class="t" style="left:1052.500px;top:989px;font-size:17.500px;font-weight:700;color:#f4f4f4;letter-spacing:0">MODEL</div>
<div class="t" style="left:1602.500px;top:989px;font-size:17.500px;font-weight:700;color:#eaeaea;width:24px"><span class="a" style="left:0">1</span><span class="a" style="left:6.800px;top:-0.500px">:</span><span class="a" style="left:10.800px">1</span></div>
<svg style="left:1120px;top:975px" width="800" height="47" viewBox="1120 975 800 47">
 <!-- grid -->
 <path d="M1137 985v24M1143 985v24M1149 985v24M1131 991h24M1131 997h24M1131 1003h24" stroke="#e6e6e6" stroke-width="1.300"/>
 <g fill="#e6e6e6"><rect x="1169" y="988" width="3.500" height="3.500"/><rect x="1177" y="988" width="3.500" height="3.500"/><rect x="1185" y="988" width="3.500" height="3.500"/><rect x="1169" y="995.500" width="3.500" height="3.500"/><rect x="1177" y="995.500" width="3.500" height="3.500"/><rect x="1185" y="995.500" width="3.500" height="3.500"/><rect x="1169" y="1003" width="3.500" height="3.500"/><rect x="1177" y="1003" width="3.500" height="3.500"/><rect x="1185" y="1003" width="3.500" height="3.500"/></g>
 <polygon points="1202.700,995 1215.300,995 1209,1001.300" fill="#dcdcdc"/>
 <!-- ortho -->
 <path d="M1234 986v23.500h23M1234 1003h6v6.500" stroke="#e6e6e6" stroke-width="1.400" fill="none"/>
 <!-- polar -->
 <circle cx="1279" cy="998.600" r="9.300" fill="none" stroke="#f4f4f4" stroke-width="1.400"/><path d="M1293.200 998.600h-14.500l10.200-10.600" stroke="#f4f4f4" stroke-width="1.400" fill="none"/>
 <polygon points="1305,995 1317,995 1311,1001" fill="#dcdcdc"/>
 <!-- isodraft -->
 <path d="M1332 988l18 18" stroke="#d84a58" stroke-width="1.200"/><path d="M1341.200 986.400v21.400" stroke="#3fc46a" stroke-width="1.200"/><rect x="1339.300" y="995.100" width="3.800" height="3.800" fill="#3b4453" stroke="#f0f0f0" stroke-width="1"/>
 <polygon points="1364.800,995 1376.800,995 1370.800,1001" fill="#dcdcdc"/>
 <!-- otrack -->
 <path d="M1415.200 1006.600h-23.900l17.800-17.400" stroke="#f4f4f4" stroke-width="1.400" fill="none"/><rect x="1397.800" y="995.600" width="4.600" height="4.600" fill="#f4f4f4"/>
 <!-- osnap -->
 <rect x="1430.600" y="989.600" width="19.800" height="19.500" fill="none" stroke="#f4f4f4" stroke-width="1.400"/><rect x="1427.500" y="986.600" width="6" height="6" fill="#5a8fc9" stroke="#f4f4f4" stroke-width="1.200"/>
 <polygon points="1463.300,995 1475.300,995 1469.300,1001" fill="#dcdcdc"/>
 <!-- annotation icons -->
 <path d="M1503.5 986L1507.9 996.500L1506.3 998.400L1513.9 1009.700L1503.5 1003.200L1493.1 1009.700L1500.7 998.400L1499.1 996.500Z" fill="#fafafa"/><circle cx="1512.900" cy="991.400" r="3.700" fill="none" stroke="#fafafa" stroke-width="1.300"/>
 <path d="M1539.6 986L1544.0 996.500L1542.3999999999999 998.400L1550.0 1009.700L1539.6 1003.200L1529.1999999999998 1009.700L1536.8 998.400L1535.1999999999998 996.500Z" fill="#dcdcdc"/><path d="M1551.500 986l-4.500 5.500h2.800l-3.300 5.500 6.500-7h-3z" fill="#dcdcdc"/>
 <path d="M1576.5 986L1580.9 996.500L1579.3 998.400L1586.9 1009.700L1576.5 1003.200L1566.1 1009.700L1573.7 998.400L1572.1 996.500Z" fill="#dcdcdc"/>
 <polygon points="1627.500,995 1639.500,995 1633.500,1001.500" fill="#dcdcdc"/>
 <!-- gear -->
 <g transform="translate(1668.500 998)" fill="#e0e0e0"><circle r="8.200"/><rect x="-2.400" y="-12" width="4.800" height="24"/><rect x="-2.400" y="-12" width="4.800" height="24" transform="rotate(45)"/><rect x="-2.400" y="-12" width="4.800" height="24" transform="rotate(90)"/><rect x="-2.400" y="-12" width="4.800" height="24" transform="rotate(135)"/><circle r="4.200" fill="#3b4453"/></g>
 <polygon points="1692.300,995 1704.700,995 1698.500,1001.300" fill="#dcdcdc"/>
 <!-- plus -->
 <path d="M1719.500 998h22M1730.500 987v22" stroke="#ececec" stroke-width="2.400"/>
 <!-- shapes -->
 <rect x="1762" y="986" width="8.500" height="8.500" fill="none" stroke="#e6e6e6" stroke-width="1.200"/><circle cx="1780" cy="996.500" r="5" fill="none" stroke="#e6e6e6" stroke-width="1.200"/><path d="M1770.500 999.500l5 9h-10z" fill="none" stroke="#e6e6e6" stroke-width="1.200"/>
 <!-- dwg trusted -->
 <path d="M1799 980h22l8.500 7v14h-30.500z" fill="#3a74b8"/><path d="M1821 980l8.500 7h-8.500z" fill="#8fb8e2"/><path d="M1806.700 980v21M1799 987.600h24" stroke="#cfe6fb" stroke-width="1.200"/><circle cx="1806.700" cy="987.600" r="2.900" fill="#3a74b8" stroke="#fff" stroke-width="1.300"/>
 <path d="M1799 1001h14l3 3.500-2.500 6.700h-14.500z" fill="#f0b429"/>
 <path d="M1814 1006.500l6.800 6.600 13-13.500" fill="none" stroke="#3fb553" stroke-width="3.600"/>
 <!-- fullscreen -->
 <rect x="1849" y="990" width="23.500" height="15" fill="none" stroke="#e6e6e6" stroke-width="1.300"/><path d="M1852 1002l6-5M1852 998v4h4.500M1869.500 993l-6 5M1865 993h4.500v4" fill="none" stroke="#e6e6e6" stroke-width="1.300"/>
 <!-- hamburger -->
 <rect x="1888" y="988.800" width="24" height="3" fill="#ececec"/><rect x="1888" y="998" width="24" height="3" fill="#ececec"/><rect x="1888" y="1007.100" width="24" height="3" fill="#ececec"/>
</svg>
<!-- PALETTE -->
<div id="palette" class="a"></div>
<!-- palette tab strip -->
<div class="a" style="left:1187.500px;top:71.70px;width:35px;height:84.88px;background:#2f3643;border-radius:5px 0 0 5px"></div>
<div class="t" style="left:1171.600px;top:104.9px;width:70.800px;text-align:left;transform:rotate(-90deg);font-size:17px;color:#d2d4d8">Annota...</div>
<div class="a" style="left:1187.500px;top:157.58px;width:38px;height:84.88px;background:#3b4453;border-radius:5px 0 0 5px"></div>
<div class="t" style="left:1171.600px;top:190.6px;width:70.800px;text-align:left;transform:rotate(-90deg);font-size:17px;color:#eeeeee">Archite...</div>
<div class="a" style="left:1187.500px;top:243.46px;width:35px;height:84.88px;background:#2f3643;border-radius:5px 0 0 5px"></div>
<div class="t" style="left:1171.600px;top:276.4px;width:70.800px;text-align:left;transform:rotate(-90deg);font-size:17px;color:#d2d4d8">Mechan...</div>
<div class="a" style="left:1187.500px;top:329.34px;width:35px;height:84.88px;background:#2f3643;border-radius:5px 0 0 5px"></div>
<div class="t c" style="left:1157px;top:362.1px;width:100px;transform:rotate(-90deg);font-size:17px;color:#d2d4d8;letter-spacing:-0.4px">Electrical</div>
<div class="a" style="left:1187.500px;top:415.22px;width:35px;height:84.88px;background:#2f3643;border-radius:5px 0 0 5px"></div>
<div class="t c" style="left:1157px;top:447.9px;width:100px;transform:rotate(-90deg);font-size:17px;color:#d2d4d8;letter-spacing:-0.8px">Civil</div>
<div class="a" style="left:1187.500px;top:501.10px;width:35px;height:84.88px;background:#2f3643;border-radius:5px 0 0 5px"></div>
<div class="t c" style="left:1157px;top:533.6px;width:100px;transform:rotate(-90deg);font-size:17px;color:#d2d4d8;letter-spacing:-0.15px">Structural</div>
<div class="a" style="left:1187.500px;top:586.98px;width:35px;height:84.88px;background:#2f3643;border-radius:5px 0 0 5px"></div>
<div class="t" style="left:1171.600px;top:619.4px;width:70.800px;text-align:left;transform:rotate(-90deg);font-size:17px;color:#d2d4d8">Hatche...</div>
<div class="a" style="left:1187.500px;top:672.86px;width:35px;height:84.88px;background:#2f3643;border-radius:5px 0 0 5px"></div>
<div class="t c" style="left:1157px;top:705.1px;width:100px;transform:rotate(-90deg);font-size:17px;color:#d2d4d8;letter-spacing:-0.55px">Tables</div>
<div class="a" style="left:1187.500px;top:758.74px;width:35px;height:84.88px;background:#2f3643;border-radius:5px 0 0 5px"></div>
<div class="t" style="left:1171.600px;top:790.9px;width:70.800px;text-align:left;transform:rotate(-90deg);font-size:17px;color:#d2d4d8">Comm...</div>
<div class="a" style="left:1187.500px;top:844.62px;width:35px;height:84.88px;background:#2f3643;border-radius:5px 0 0 5px"></div>
<div class="t c" style="left:1157px;top:876.6px;width:100px;transform:rotate(-90deg);font-size:17px;color:#d2d4d8;letter-spacing:-0.5px">Leaders</div>

<!-- palette frame -->
<div class="a" style="left:1219px;top:67px;width:255.500px;height:898.500px;background:#303744;border-radius:6px 6px 4px 4px;box-shadow:1.500px 1px 1.500px rgba(10,14,20,0.600)"></div>
<div class="a" style="left:1224px;top:72px;width:216px;height:889px;background:#3b4453;border:1px solid #465060;border-radius:6px;overflow:hidden">
 <div class="a" style="left:0;top:0;width:214px;height:879.500px;overflow:hidden;font-size:17.600px;color:#e8e8e8">
  <div class="t" style="left:9px;top:23px;color:#b9bdc5;font-size:17.700px">Imperial samples</div>
  <div class="t" style="left:9px;top:635px;color:#b9bdc5;font-size:17.700px">Metric samples</div>
  <div class="t" style="left:72.500px;top:69px;word-spacing:3.500px">Door -</div>
<div class="t" style="left:72.500px;top:93px">Imperial</div>
<div class="t" style="left:72.500px;top:131px;word-spacing:4px">Window -</div>
<div class="t" style="left:72.500px;top:155px">Imperial</div>
<div class="t" style="left:72.500px;top:193px;letter-spacing:0.400px">Aluminum</div>
<div class="t" style="left:72.500px;top:217px;word-spacing:-2.200px">Window&nbsp; (Ele...</div>
<div class="t" style="left:72.500px;top:255px">Fluorescent</div>
<div class="t" style="left:72.500px;top:279px;letter-spacing:-0.350px;word-spacing:-2.300px">(Recessed)&nbsp; -...</div>
<div class="t" style="left:72.500px;top:317px">Stud -</div>
<div class="t" style="left:72.500px;top:341px">Imperial</div>
<div class="t" style="left:72.500px;top:379px">Toilet -</div>
<div class="t" style="left:72.500px;top:403px">Imperial</div>
<div class="t" style="left:72.500px;top:441px;letter-spacing:-0.500px;word-spacing:-1px">Trees -</div>
<div class="t" style="left:72.500px;top:465px">Imperial</div>
<div class="t" style="left:72.500px;top:503px;letter-spacing:-0.300px">Vehicles -</div>
<div class="t" style="left:72.500px;top:527px">Imperial</div>
<div class="t" style="left:72.500px;top:565px;letter-spacing:0.700px">Door</div>
<div class="t" style="left:72.500px;top:589px;word-spacing:-1.800px">Elevation&nbsp; - I...</div>
<div class="t" style="left:72.500px;top:694px;word-spacing:2.500px">Door - Metric</div>
<div class="t" style="left:72.500px;top:743px;word-spacing:4px">Window -</div>
<div class="t" style="left:72.500px;top:767px">Metric</div>
<div class="t" style="left:72.500px;top:805px;letter-spacing:0.400px">Aluminum</div>
<div class="t" style="left:72.500px;top:829px;word-spacing:-2.200px">Window&nbsp; (Ele...</div>
<div class="t" style="left:72.500px;top:867px">Fluorescent</div>
<div class="t" style="left:72.500px;top:891px">(Recessed)</div>

  <svg style="left:-1225px;top:-73px" width="1480" height="1022" viewBox="0 0 1480 1022"><g transform="translate(0 0)"><path d="M1243.500 179.600V168.500L1283.500 145M1244.500 170.300L1284.300 146.800" stroke="#dcdcdc" stroke-width="1.2" fill="none"/><path d="M1283.500 145Q1288.200 153 1287.600 167V179.600" stroke="#dcdcdc" stroke-width="1.2" fill="none"/><rect x="1242.300" y="145" width="1.300" height="1.300" fill="#dcdcdc"/></g><polygon transform="translate(0 -736)" points="1283.300,899.500 1266.700,910.800 1276.500,912.600 1272.600,922.700 1289.500,910.900 1281,908.400" fill="#f7c869"/>
<g transform="translate(0 0)"><path d="M1242.500 223.300h44.500M1242.600 220v7.300M1286.800 220v7.300" stroke="#dcdcdc" stroke-width="1.400" fill="none"/></g><polygon transform="translate(0 -674)" points="1283.300,899.500 1266.700,910.800 1276.500,912.600 1272.600,922.700 1289.500,910.900 1281,908.400" fill="#f7c869"/>
<g transform="translate(0 0)"><rect x="1242.500" y="263.500" width="40" height="41.200" stroke="#dcdcdc" stroke-width="1.2" fill="none"/><rect x="1246.500" y="267.200" width="32" height="32.500" stroke="#dcdcdc" stroke-width="1.2" fill="none"/><path d="M1262.500 267.200v32.500" stroke="#dcdcdc" stroke-width="1.2" fill="none"/></g><polygon transform="translate(0 -612)" points="1283.300,899.500 1266.700,910.800 1276.500,912.600 1272.600,922.700 1289.500,910.900 1281,908.400" fill="#f7c869"/>
<g transform="translate(0 0)"><rect x="1242.500" y="339.500" width="44.500" height="18" stroke="#dcdcdc" stroke-width="1.2" fill="none"/><rect x="1246.500" y="343" width="36" height="10.500" stroke="#dcdcdc" stroke-width="1.2" fill="none"/><circle cx="1264.500" cy="348.200" r="4" stroke="#dcdcdc" stroke-width="1.2" fill="none"/></g><polygon transform="translate(0 -550)" points="1283.300,899.500 1266.700,910.800 1276.500,912.600 1272.600,922.700 1289.500,910.900 1281,908.400" fill="#f7c869"/>
<g transform="translate(0 0)"><rect x="1251.500" y="387.500" width="26" height="44" stroke="#dcdcdc" stroke-width="1.2" fill="none"/><path d="M1251.500 387.500l26 44M1277.500 387.500l-26 44" stroke="#dcdcdc" stroke-width="1.2" fill="none"/></g><polygon transform="translate(0 -488)" points="1283.300,899.500 1266.700,910.800 1276.500,912.600 1272.600,922.700 1289.500,910.900 1281,908.400" fill="#f7c869"/>
<g transform="translate(0 0)"><rect x="1242.300" y="449.400" width="5" height="25" stroke="#dcdcdc" stroke-width="1.2" fill="none"/><path d="M1247.300 469.200h39.500v5.200h-39.500M1248.700 474.400L1252.400 487.500V493.300H1272V487.500M1286 474.400Q1282.500 483 1272 487.500" stroke="#dcdcdc" stroke-width="1.2" fill="none"/></g><polygon transform="translate(0 -426)" points="1283.300,899.500 1266.700,910.800 1276.500,912.600 1272.600,922.700 1289.500,910.900 1281,908.400" fill="#f7c869"/>
<g transform="translate(0 41.300) scale(1 0.926)"><path d="M1262.600 557.900H1271M1263 557.900C1263.600 551 1264 547 1261.500 541.500M1270.600 557.900C1270 551 1270 547 1273 541.500M1263.7 546Q1255.9 539.5 1243 538M1263.9 546Q1256.6 533.6 1244.5 529M1264.3 546Q1258.4 528.8 1248.5 521.5M1265.1 546Q1261.1 525.2 1254.5 516M1265.8 546Q1264.0 523.6 1261 513.5M1266.6 546Q1267.0 523.2 1267.5 513M1267.4 546Q1269.9 524.5 1274 515M1268.1 546Q1272.6 526.8 1280 518.5M1268.8 546Q1275.0 530.4 1285.5 524M1269.2 546Q1276.6 535.6 1289 532M1269.1 546Q1276.2 541.1 1288 540.5M1264.0 546Q1257.3 544.4 1246 545.5M1256 531q-4-4-9-4M1258 526q-2-5-6-8M1262.500 523q-1-5-3-8M1270.500 523q1-5 4-8M1275 527q3-5 7-7M1277 533q5-3 10-3M1254 537q-5 0-9 2M1279 539q4 0 8 2" stroke="#dcdcdc" stroke-width="1.2" fill="none"/><g stroke="#dcdcdc" stroke-width="1.2" fill="none"><ellipse cx="1243" cy="536" rx="1.600" ry="2.800" transform="rotate(80 1243 536)"/><ellipse cx="1244.5" cy="527" rx="1.600" ry="2.800" transform="rotate(60 1244.5 527)"/><ellipse cx="1248.5" cy="519.5" rx="1.600" ry="2.800" transform="rotate(40 1248.5 519.5)"/><ellipse cx="1254.5" cy="514" rx="1.600" ry="2.800" transform="rotate(25 1254.5 514)"/><ellipse cx="1261" cy="511.5" rx="1.600" ry="2.800" transform="rotate(8 1261 511.5)"/><ellipse cx="1267.5" cy="511" rx="1.600" ry="2.800" transform="rotate(0 1267.5 511)"/><ellipse cx="1274" cy="513" rx="1.600" ry="2.800" transform="rotate(-15 1274 513)"/><ellipse cx="1280" cy="516.5" rx="1.600" ry="2.800" transform="rotate(-35 1280 516.5)"/><ellipse cx="1285.5" cy="522" rx="1.600" ry="2.800" transform="rotate(-50 1285.5 522)"/><ellipse cx="1289" cy="530" rx="1.600" ry="2.800" transform="rotate(-70 1289 530)"/><ellipse cx="1288" cy="538.5" rx="1.600" ry="2.800" transform="rotate(-85 1288 538.5)"/><ellipse cx="1246" cy="543.5" rx="1.600" ry="2.800" transform="rotate(95 1246 543.5)"/></g></g><polygon transform="translate(0 -364)" points="1283.300,899.500 1266.700,910.800 1276.500,912.600 1272.600,922.700 1289.500,910.900 1281,908.400" fill="#f7c869"/>
<g transform="translate(0 0)"><path d="M1249 600h-5q-3-4 1-7l10-2q8-5 14-5h8q6 1 10 6q2 4-1 8h-4M1257 600h19" stroke="#dcdcdc" stroke-width="1.2" fill="none"/><circle cx="1253" cy="600.500" r="3.200" stroke="#dcdcdc" stroke-width="1.2" fill="none"/><circle cx="1280" cy="600.500" r="3.200" stroke="#dcdcdc" stroke-width="1.2" fill="none"/></g><polygon transform="translate(0 -302)" points="1283.300,899.500 1266.700,910.800 1276.500,912.600 1272.600,922.700 1289.500,910.900 1281,908.400" fill="#f7c869"/>
<g transform="translate(0 0)"><rect x="1253" y="636" width="23.500" height="43.500" stroke="#dcdcdc" stroke-width="2" fill="none"/><rect x="1257.500" y="640.500" width="15" height="39" stroke="#dcdcdc" stroke-width="1.2" fill="none"/><path d="M1270 660v4" stroke="#dcdcdc" stroke-width="1.2" fill="none"/></g><polygon transform="translate(0 -240)" points="1283.300,899.500 1266.700,910.800 1276.500,912.600 1272.600,922.700 1289.500,910.900 1281,908.400" fill="#f7c869"/>
<g transform="translate(0 613)"><path d="M1243.500 179.600V168.500L1283.500 145M1244.500 170.300L1284.300 146.800" stroke="#dcdcdc" stroke-width="1.2" fill="none"/><path d="M1283.500 145Q1288.200 153 1287.600 167V179.600" stroke="#dcdcdc" stroke-width="1.2" fill="none"/><rect x="1242.300" y="145" width="1.300" height="1.300" fill="#dcdcdc"/></g><polygon transform="translate(0 -123)" points="1283.300,899.500 1266.700,910.800 1276.500,912.600 1272.600,922.700 1289.500,910.900 1281,908.400" fill="#f7c869"/>
<g transform="translate(0 612)"><path d="M1242.500 223.300h44.500M1242.600 220v7.300M1286.800 220v7.300" stroke="#dcdcdc" stroke-width="1.400" fill="none"/></g><polygon transform="translate(0 -62)" points="1283.300,899.500 1266.700,910.800 1276.500,912.600 1272.600,922.700 1289.500,910.900 1281,908.400" fill="#f7c869"/>
<g transform="translate(0 612)"><rect x="1242.500" y="263.500" width="40" height="41.200" stroke="#dcdcdc" stroke-width="1.2" fill="none"/><rect x="1246.500" y="267.200" width="32" height="32.500" stroke="#dcdcdc" stroke-width="1.2" fill="none"/><path d="M1262.500 267.200v32.500" stroke="#dcdcdc" stroke-width="1.2" fill="none"/></g><polygon transform="translate(0 0)" points="1283.300,899.500 1266.700,910.800 1276.500,912.600 1272.600,922.700 1289.500,910.900 1281,908.400" fill="#f7c869"/>
<g transform="translate(0 612)"><rect x="1242.500" y="339.500" width="44.500" height="18" stroke="#dcdcdc" stroke-width="1.2" fill="none"/><rect x="1246.500" y="343" width="36" height="10.500" stroke="#dcdcdc" stroke-width="1.2" fill="none"/><circle cx="1264.500" cy="348.200" r="4" stroke="#dcdcdc" stroke-width="1.2" fill="none"/></g><polygon transform="translate(0 62)" points="1283.300,899.500 1266.700,910.800 1276.500,912.600 1272.600,922.700 1289.500,910.900 1281,908.400" fill="#f7c869"/>
</svg>
 </div>
 <div class="a" style="left:200px;top:8px;width:8px;height:612px;background:#2a303c;border-radius:4px"></div>
</div>
<div class="a" style="left:1189px;top:158px;width:38px;height:84.500px;background:#3b4453;border-radius:5px 0 0 5px"></div>
<div class="t" style="left:1171.600px;top:190px;width:70.800px;text-align:left;transform:rotate(-90deg);font-size:17px;color:#eeeeee">Archite...</div>
<svg style="left:1440px;top:67px" width="36" height="900" viewBox="1440 67 36 900">
 <path d="M1452 77l10.500 10.500M1462.500 77l-10.500 10.500" stroke="#c9cacf" stroke-width="3.200"/>
 <rect x="1451" y="104" width="1.500" height="15" fill="#c9cacf"/><rect x="1452" y="106.500" width="3" height="10" fill="#c9cacf"/><polygon points="1463,106 1463,117.500 1457,111.700" fill="#c9cacf"/>
 <g transform="translate(1457.500 140.500)" fill="#c9cacf"><circle r="4.700"/><rect x="-1.750" y="-7.700" width="3.500" height="15.400"/><rect x="-1.750" y="-7.700" width="3.500" height="15.400" transform="rotate(45)"/><rect x="-1.750" y="-7.700" width="3.500" height="15.400" transform="rotate(90)"/><rect x="-1.750" y="-7.700" width="3.500" height="15.400" transform="rotate(135)"/><circle r="2.400" fill="#303744"/></g>
 <path d="M1447.800 939h18.400v5.500l-4.200 3.500v14h-14.200z" fill="#f4f4f4"/><path d="M1462.800 949l3.400-2.800v5.300l-3.400 2.800z" fill="#ffffff"/>
 <g fill="#4a4a4a"><rect x="1450.500" y="942" width="3.500" height="3.500"/><rect x="1456.500" y="942" width="3.500" height="3.500"/><rect x="1450.500" y="948.500" width="3.500" height="3.500"/><rect x="1456.500" y="948.500" width="3.500" height="3.500"/><rect x="1450.500" y="955" width="3.500" height="3.500"/><rect x="1456.500" y="955" width="3.500" height="3.500"/></g>
</svg>
<div class="t c" style="left:1310px;top:790px;width:300px;transform:rotate(-90deg);font-size:17px;letter-spacing:-0.950px;word-spacing:1.800px;color:#d4d6da">TOOL PALETTES - ALL PALETTES</div>
</body>
</html>
